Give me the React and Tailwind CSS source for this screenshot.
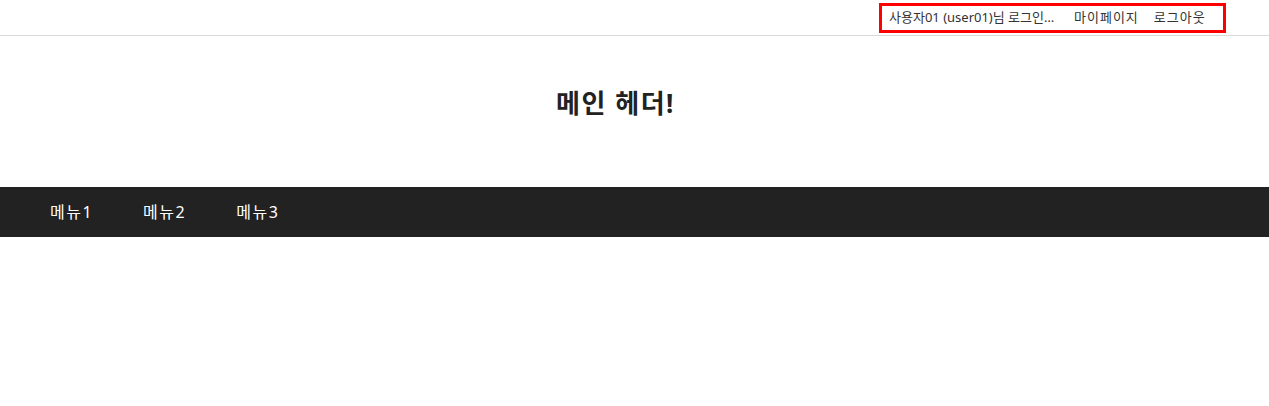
export default function App() {
  return (
    <div className="min-h-[406px] bg-white font-['Noto_Sans','Noto_Sans_CJK_KR',sans-serif] text-[#222]">
      <div className="flex h-[36px] items-center justify-end border-b border-[#d9d9d9] pr-[43px]">
        <ul className="flex h-[30px] w-[347px] items-center gap-[15px] border-[3px] border-[#ff0000] pl-[7px] text-[13px] text-[#333]">
          <li className="max-w-[170px] truncate">사용자01 (user01)님 로그인하셨습니다</li>
          <li className="tracking-[1px]">마이페이지</li>
          <li className="tracking-[1px]">로그아웃</li>
        </ul>
      </div>
      <header className="flex h-[151px] items-center justify-center pb-[16px] pr-[38px]">
        <h1 className="text-[26px] font-bold tracking-[1.5px] text-[#222]">메인 헤더!</h1>
      </header>
      <nav className="flex h-[50px] items-center bg-[#222222] px-[25px]">
        <ul className="flex text-[16px] tracking-[1.5px] text-white">
          <li className="px-[25px]">메뉴1</li>
          <li className="px-[25px]">메뉴2</li>
          <li className="px-[25px]">메뉴3</li>
        </ul>
      </nav>
    </div>
  );
}
